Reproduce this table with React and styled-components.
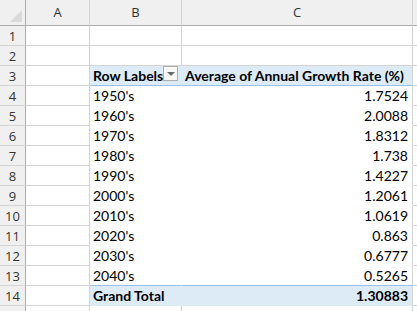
import React from 'react';
import styled, { createGlobalStyle } from 'styled-components';

const GlobalStyle = createGlobalStyle`
  html, body {
    margin: 0;
    padding: 0;
    background: #ffffff;
    overflow: hidden;
  }
  body {
    font-family: Lato, "Liberation Sans", sans-serif;
  }
`;

const GRID = '#d4d4d4';
const HEAD_LINE = '#ababab';
const PIVOT_BG = '#ddebf7';
const PIVOT_LINE = '#9bc2e6';

const Sheet = styled.div`
  display: grid;
  grid-template-columns: 26px 64px 92px 231px 1fr;
  grid-template-rows: 26px repeat(15, 20px);
  width: 417px;
  height: 311px;
  overflow: hidden;
  font-size: 14px;
  color: #000;
`;

const Corner = styled.div`
  position: relative;
  background: #f0f0f0;
  border-right: 1px solid ${HEAD_LINE};
  border-bottom: 1px solid ${HEAD_LINE};
  &::after {
    content: '';
    position: absolute;
    right: 3px;
    bottom: 3px;
    width: 0;
    height: 0;
    border-left: 12px solid transparent;
    border-bottom: 12px solid #dadada;
  }
`;

const ColHead = styled.div`
  display: flex;
  align-items: flex-end;
  justify-content: center;
  padding-bottom: 4px;
  background: #f0f0f0;
  color: #333;
  font-family: "Open Sans", "Liberation Sans", sans-serif;
  font-size: 13px;
  border-bottom: 1px solid ${HEAD_LINE};
  border-right: 1px solid ${p => (p.$last ? 'transparent' : GRID)};
  box-sizing: border-box;
`;

const RowHead = styled.div`
  display: flex;
  align-items: center;
  justify-content: center;
  background: #f0f0f0;
  color: #333;
  font-family: "Open Sans", "Liberation Sans", sans-serif;
  font-size: 13px;
  border-right: 1px solid ${HEAD_LINE};
  border-bottom: 1px solid ${GRID};
`;

const Cell = styled.div`
  display: flex;
  align-items: flex-end;
  padding: 0 3px 1px;
  box-sizing: border-box;
  min-width: 0;
  white-space: nowrap;
  border-right: 1px solid ${p => (p.$noRight ? 'transparent' : GRID)};
  border-bottom: 1px solid ${p => (p.$noBottom ? 'transparent' : GRID)};
`;

const PivotCell = styled.div`
  display: flex;
  align-items: flex-end;
  padding: 0 3px 1px 3px;
  padding-right: ${p => (p.$right ? '4px' : '3px')};
  box-sizing: border-box;
  white-space: nowrap;
  justify-content: ${p => (p.$right ? 'flex-end' : 'flex-start')};
  background: ${p => (p.$band ? PIVOT_BG : '#ffffff')};
  font-weight: ${p => (p.$band ? 700 : 400)};
  border-right: 1px solid ${p => (p.$edge ? GRID : 'transparent')};
  border-top: ${p => (p.$total ? `1px solid ${PIVOT_LINE}` : 'none')};
  border-bottom: ${p => (p.$header ? `1px solid ${PIVOT_LINE}` : '1px solid transparent')};
  margin-top: ${p => (p.$total ? '-1px' : '0')};
`;

const HeaderLabel = styled.span`
  flex: 1;
`;

const DropButton = styled.span`
  display: flex;
  align-items: center;
  justify-content: center;
  width: 15px;
  height: 13px;
  margin: 0 0 3px;
  border: 1px solid #adadad;
  background: #f7f7f7;
  &::before {
    content: '';
    width: 0;
    height: 0;
    border-left: 4px solid transparent;
    border-right: 4px solid transparent;
    border-top: 4px solid #6b6b6b;
  }
`;

const rows = [
  ["1950's", '1.7524'],
  ["1960's", '2.0088'],
  ["1970's", '1.8312'],
  ["1980's", '1.738'],
  ["1990's", '1.4227'],
  ["2000's", '1.2061'],
  ["2010's", '1.0619'],
  ["2020's", '0.863'],
  ["2030's", '0.6777'],
  ["2040's", '0.5265'],
];

export default function App() {
  return (
    <>
      <GlobalStyle />
      <Sheet>
        <Corner />
        <ColHead>A</ColHead>
        <ColHead>B</ColHead>
        <ColHead>C</ColHead>
        <ColHead $last />

        {[1, 2].map(n => (
          <React.Fragment key={n}>
            <RowHead>{n}</RowHead>
            <Cell />
            <Cell />
            <Cell />
            <Cell $noRight />
          </React.Fragment>
        ))}

        <RowHead>3</RowHead>
        <Cell />
        <PivotCell $band $header>
          <HeaderLabel>Row Labels</HeaderLabel>
          <DropButton />
        </PivotCell>
        <PivotCell $band $header $edge>Average of Annual Growth Rate (%)</PivotCell>
        <Cell $noRight />

        {rows.map(([label, value], i) => (
          <React.Fragment key={label}>
            <RowHead>{i + 4}</RowHead>
            <Cell />
            <PivotCell>{label}</PivotCell>
            <PivotCell $right $edge>{value}</PivotCell>
            <Cell $noRight />
          </React.Fragment>
        ))}

        <RowHead>14</RowHead>
        <Cell />
        <PivotCell $band $total>Grand Total</PivotCell>
        <PivotCell $band $total $right $edge>1.30883</PivotCell>
        <Cell $noRight />

        <RowHead />
        <Cell />
        <Cell />
        <Cell />
        <Cell $noRight />
      </Sheet>
    </>
  );
}
